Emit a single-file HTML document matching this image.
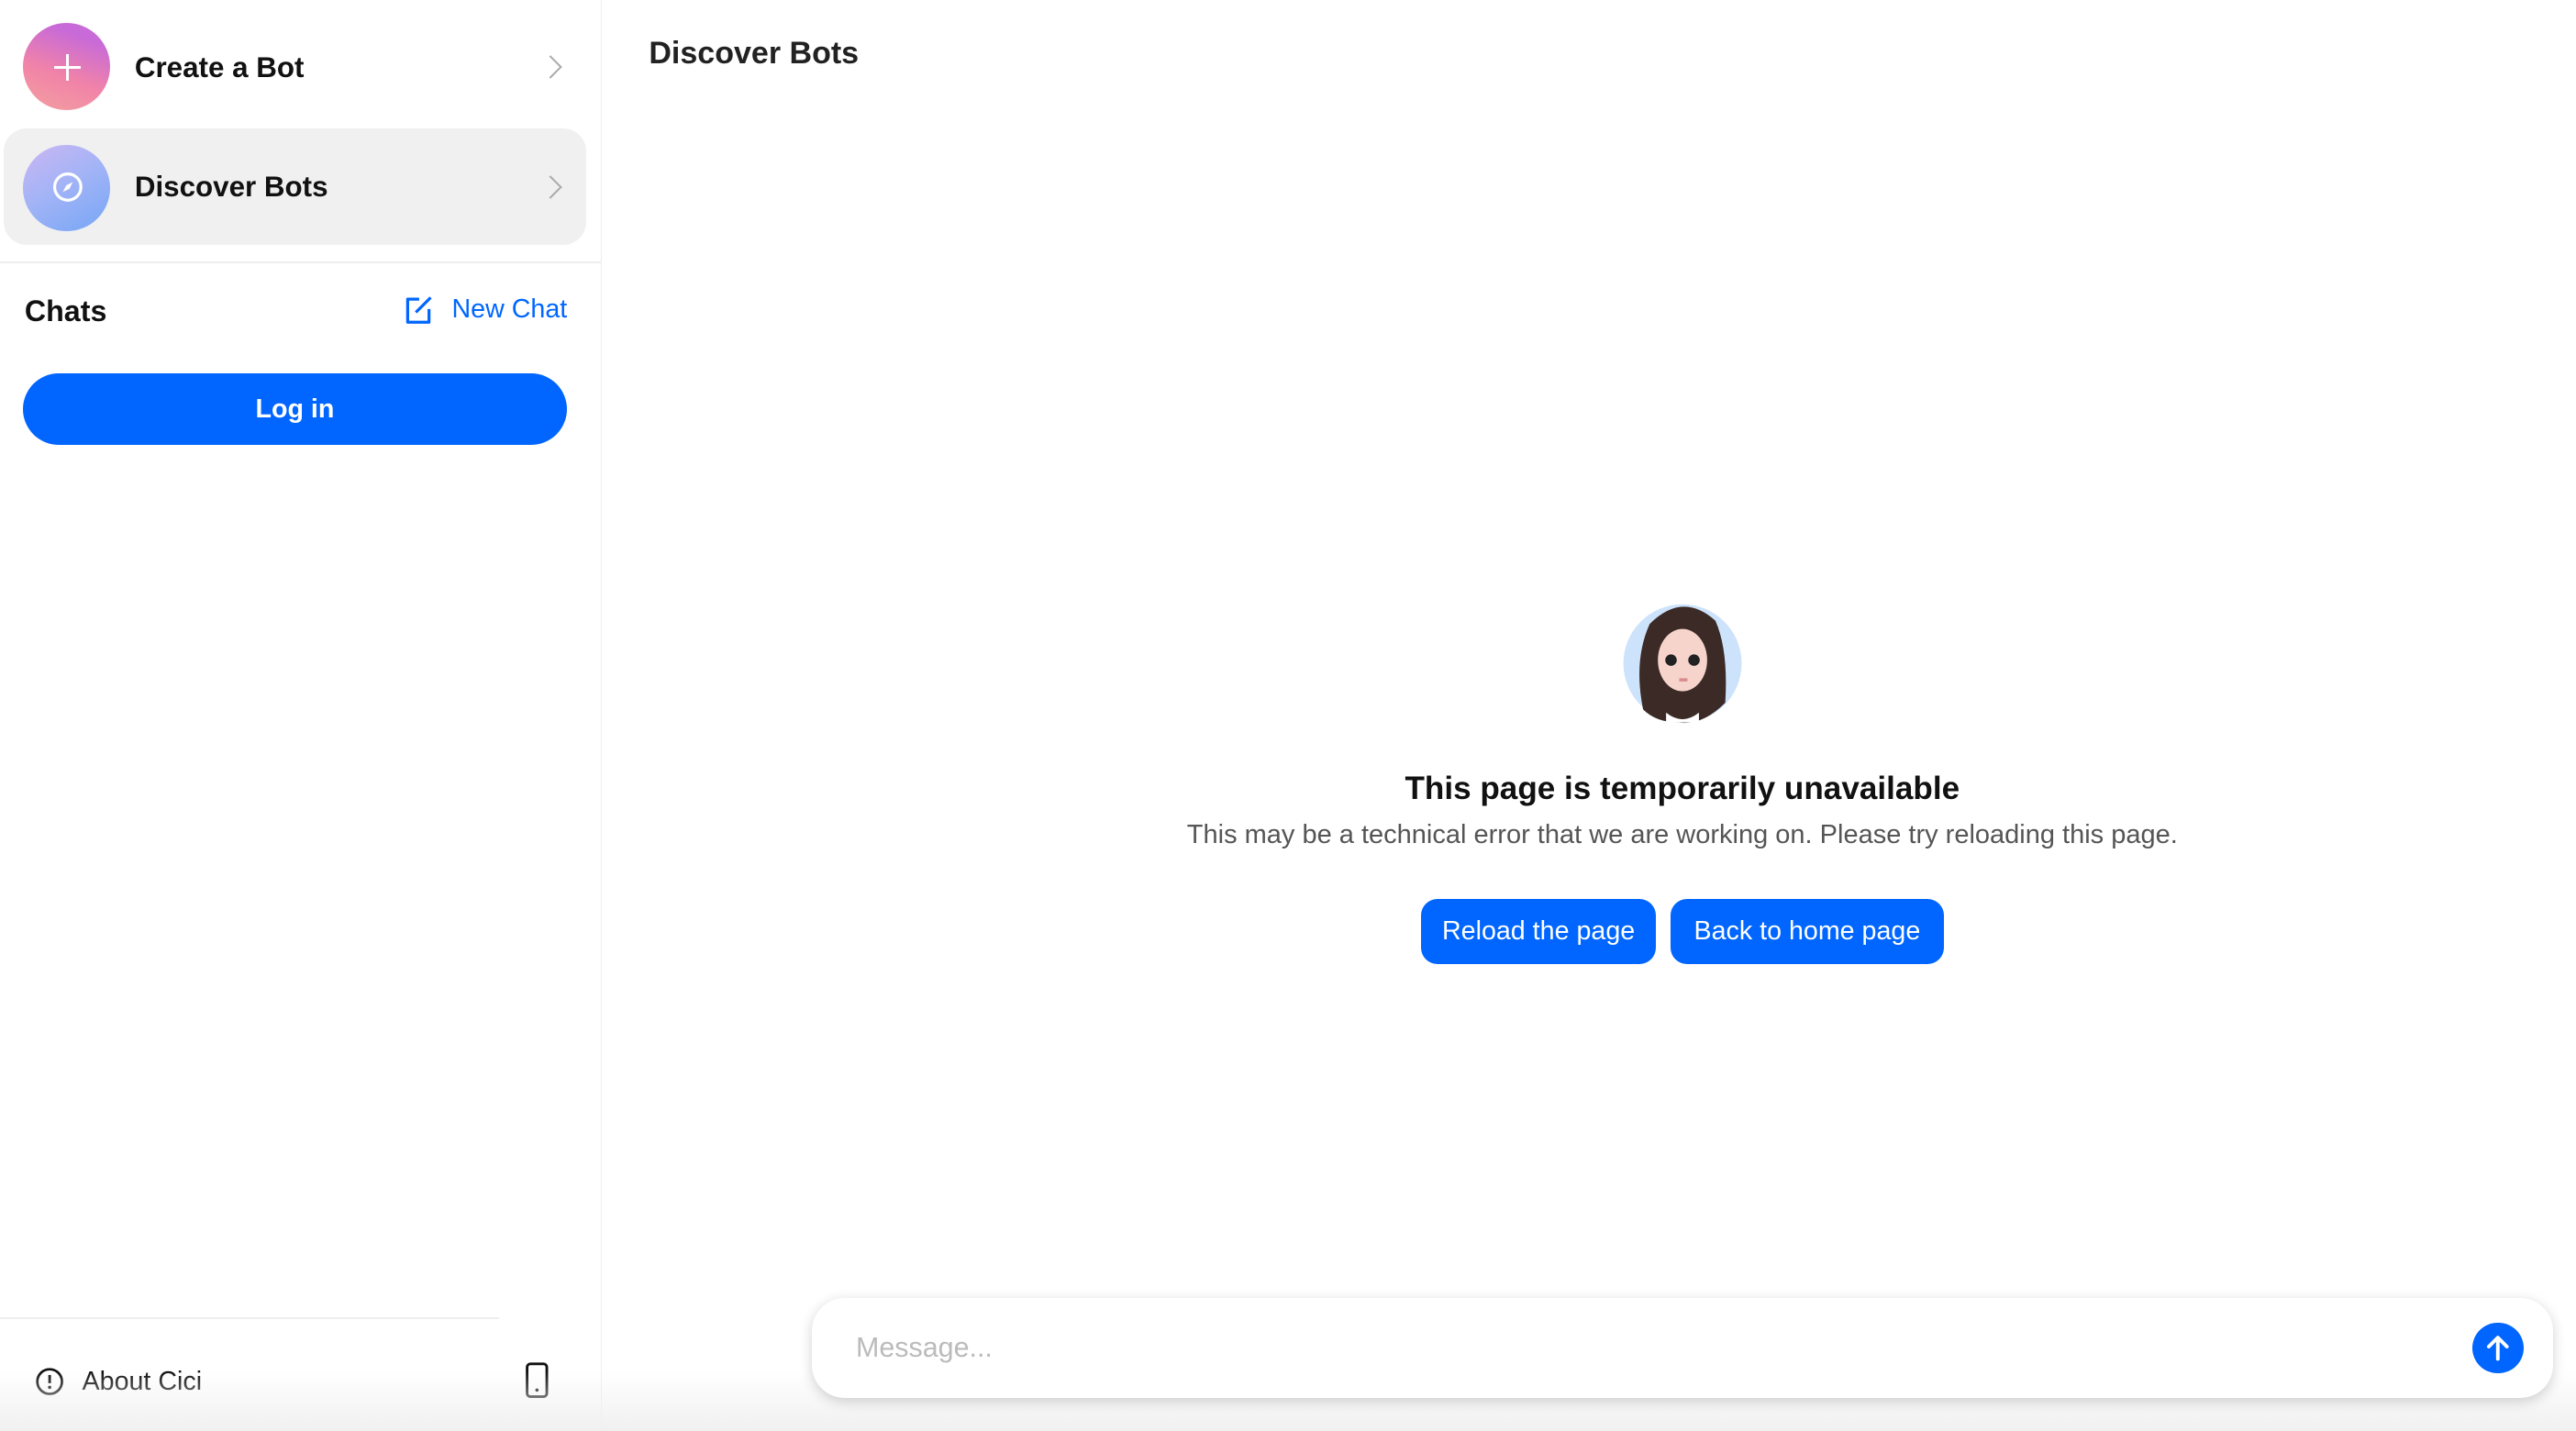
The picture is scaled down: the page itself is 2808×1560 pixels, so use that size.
<!DOCTYPE html>
<html><head><meta charset="utf-8"><style>
html,body{margin:0;padding:0;background:#fff;overflow:hidden}
#r{width:1568px;height:871px;position:relative;zoom:1.79082;font-family:"Liberation Sans",sans-serif;color:#111;overflow:hidden}
.a{position:absolute}
.side{left:0;top:0;width:366px;height:871px;border-right:1px solid #eee}
.row{left:2px;width:355px;height:71px;border-radius:14px}
.ic{width:53px;height:53px;border-radius:50%;left:14px}
.lbl{left:82px;font-size:17.5px;font-weight:bold;color:#111}
.chev{left:330px;width:9px;height:9px;border-right:1.5px solid #aaa;border-top:1.5px solid #aaa;transform:rotate(45deg)}
.btn{background:#0066ff;color:#fff;font-size:16px;text-align:center;border-radius:10px;height:40px;line-height:40px;top:547px}
</style></head><body><div id="r">
<div class="a side"></div>
<div class="a ic" style="top:14px;background:linear-gradient(200deg,#c86ad8 20%,#f183a8 60%,#f3a0a0);"></div>
<div class="a" style="left:33px;top:40px;width:16px;height:2px;background:#fff"></div>
<div class="a" style="left:40px;top:33px;width:2px;height:16px;background:#fff"></div>
<div class="a lbl" style="top:31px">Create a Bot</div>
<div class="a chev" style="top:36px"></div>
<div class="a row" style="top:78px;background:#f0f0f0"></div>
<div class="a ic" style="top:88px;background:linear-gradient(150deg,#cbb6f3,#a4b4f6 45%,#76a6f6);"></div>
<svg class="a" style="left:31px;top:104px" width="20" height="20" viewBox="0 0 20 20"><circle cx="10" cy="10" r="8" fill="none" stroke="#fff" stroke-width="1.8"/><path d="M13 7 L11 11 L7 13 L9 9 Z" fill="#fff"/></svg>
<div class="a lbl" style="top:104px">Discover Bots</div>
<div class="a chev" style="top:109px"></div>
<div class="a" style="left:0;top:159px;width:366px;height:1px;background:#eee"></div>
<div class="a" style="left:15px;top:179px;font-size:18px;font-weight:bold">Chats</div>
<svg class="a" style="left:245px;top:178px" width="20" height="20" viewBox="0 0 20 20"><path d="M10 4 H3 V18 H16 V10" fill="none" stroke="#0066ff" stroke-width="1.8" stroke-linejoin="round"/><path d="M8 12 L17 3" stroke="#0066ff" stroke-width="1.8"/></svg>
<div class="a" style="left:275px;top:179px;font-size:16px;color:#0066ff">New Chat</div>
<div class="a" style="left:14px;top:227px;width:331px;height:44px;border-radius:22px;background:#0066ff;color:#fff;font-size:16px;font-weight:bold;text-align:center;line-height:44px">Log in</div>
<div class="a" style="left:0;top:802px;width:304px;height:1px;background:#eee"></div>
<svg class="a" style="left:21px;top:832px" width="18" height="18" viewBox="0 0 18 18"><circle cx="9" cy="9" r="7.5" fill="none" stroke="#111" stroke-width="1.5"/><path d="M9 5v5" stroke="#111" stroke-width="1.6"/><circle cx="9" cy="12.5" r="1" fill="#111"/></svg>
<div class="a" style="left:50px;top:832px;font-size:16px">About Cici</div>
<svg class="a" style="left:319px;top:829px" width="16" height="22" viewBox="0 0 16 22"><rect x="2" y="1" width="12" height="20" rx="2" fill="none" stroke="#111" stroke-width="1.6"/><circle cx="8" cy="17" r="1" fill="#111"/></svg>
<div class="a" style="left:0;top:835px;width:1568px;height:36px;background:linear-gradient(#fff0,#f0f0f0)"></div>
<div class="a" style="left:395px;top:22px;font-size:19px;font-weight:bold;color:#222">Discover Bots</div>
<svg class="a" style="left:986px;top:362px" width="76" height="80" viewBox="0 0 76 80"><circle cx="38" cy="42" r="36" fill="#cde3fb"/><path d="M14 70 Q8 40 18 18 Q38 -2 58 16 Q66 34 64 66 Q50 80 36 78 Q22 78 14 70Z" fill="#3b2a26"/><ellipse cx="38" cy="40" rx="15" ry="19" fill="#f6d4cc"/><circle cx="31" cy="40" r="3.5" fill="#222"/><circle cx="45" cy="40" r="3.5" fill="#222"/><path d="M36 52 h5" stroke="#d98c8c" stroke-width="2"/><path d="M28 72 Q38 80 48 72 L48 78 L28 78Z" fill="#fff"/></svg>
<div class="a" style="left:0;width:2048px;top:469px;font-size:19.6px;font-weight:bold;text-align:center;color:#111">This page is temporarily unavailable</div>
<div class="a" style="left:0;width:2048px;top:499px;font-size:16.2px;text-align:center;color:#555">This may be a technical error that we are working on. Please try reloading this page.</div>
<div class="a btn" style="left:865px;width:143px">Reload the page</div>
<div class="a btn" style="left:1017px;width:166px">Back to home page</div>
<div class="a" style="left:494px;top:790px;width:1060px;height:61px;border-radius:20px;background:#fff;box-shadow:0 2px 8px rgba(0,0,0,.18)"></div>
<div class="a" style="left:521px;top:811px;font-size:17px;color:#bbb">Message...</div>
<div class="a" style="left:1505px;top:805px;width:31px;height:31px;border-radius:50%;background:#0066ff"></div>
<svg class="a" style="left:1510px;top:810px" width="21" height="21" viewBox="0 0 21 21"><path d="M10.5 17V4 M5 9.5 L10.5 4 L16 9.5" fill="none" stroke="#fff" stroke-width="2.2" stroke-linecap="round" stroke-linejoin="round"/></svg>
</div></body></html>
